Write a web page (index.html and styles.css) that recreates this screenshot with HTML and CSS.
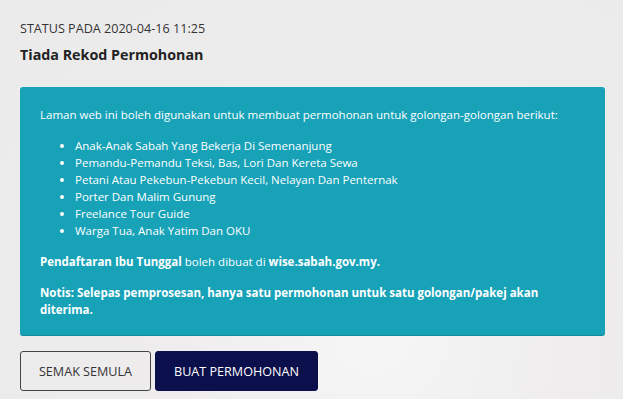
FILE: index.html
```html
<!DOCTYPE html>
<html>
<head>
<meta charset="utf-8">
<link rel="stylesheet" href="styles.css">
</head>
<body>
<div class="page">
  <div class="status">STATUS PADA 2020-04-16 11:25</div>
  <h1 class="title">Tiada Rekod Permohonan</h1>
  <div class="info">
    <p class="intro">Laman web ini boleh digunakan untuk membuat permohonan untuk golongan-golongan berikut:</p>
    <ul class="list">
      <li>Anak-Anak Sabah Yang Bekerja Di Semenanjung</li>
      <li>Pemandu-Pemandu Teksi, Bas, Lori Dan Kereta Sewa</li>
      <li>Petani Atau Pekebun-Pekebun Kecil, Nelayan Dan Penternak</li>
      <li>Porter Dan Malim Gunung</li>
      <li>Freelance Tour Guide</li>
      <li>Warga Tua, Anak Yatim Dan OKU</li>
    </ul>
    <p class="reg"><b>Pendaftaran Ibu Tunggal</b> boleh dibuat di <b>wise.sabah.gov.my.</b></p>
    <p class="notice"><b>Notis: Selepas pemprosesan, hanya satu permohonan untuk satu golongan/pakej akan diterima.</b></p>
  </div>
  <div class="actions">
    <button class="btn btn-outline">SEMAK SEMULA</button>
    <button class="btn btn-dark">BUAT PERMOHONAN</button>
  </div>
</div>
</body>
</html>
```
FILE: styles.css
```css
* { box-sizing: border-box; }
html, body { margin: 0; padding: 0; }
body {
  width: 623px;
  height: 399px;
  overflow: hidden;
  font-family: "Open Sans", sans-serif;
  background: radial-gradient(ellipse at 60% 85%, #f7f6f6 0%, #eeecec 40%, #ebebeb 100%);
  color: #222;
}
.page {
  padding: 20px 18px 0 20px;
}
.status {
  font-size: 12.6px;
  line-height: 18px;
  color: #333;
}
.title {
  margin: 7px 0 0 0;
  font-size: 14.3px;
  font-weight: 700;
  line-height: 20px;
  color: #222;
}
.info {
  margin-top: 22px;
  width: 585px;
  background: #17a2b8;
  border-radius: 3px;
  border-bottom: 1px solid #138c9d;
  color: #fff;
  padding: 19px 20px 17px 20px;
  font-size: 11.5px;
  line-height: 17px;
}
.intro { margin: 0 0 14px 0; }
.list {
  margin: 0 0 14px 0;
  padding-left: 35px;
}
.list li { line-height: 17px; }
.reg { margin: 0 0 14px 0; }
.notice { margin: 0; }
.actions {
  display: flex;
  gap: 4px;
  margin-top: 15px;
}
.btn {
  height: 40px;
  font-family: "Open Sans", sans-serif;
  font-size: 12.6px;
  border-radius: 3px;
  padding: 0;
  white-space: nowrap;
  cursor: pointer;
}
.btn-outline {
  width: 131px;
  background: transparent;
  border: 1px solid #444;
  color: #333;
}
.btn-dark {
  width: 163px;
  background: #0b0f4b;
  border: 1px solid #0b0f4b;
  color: #fff;
}
```
